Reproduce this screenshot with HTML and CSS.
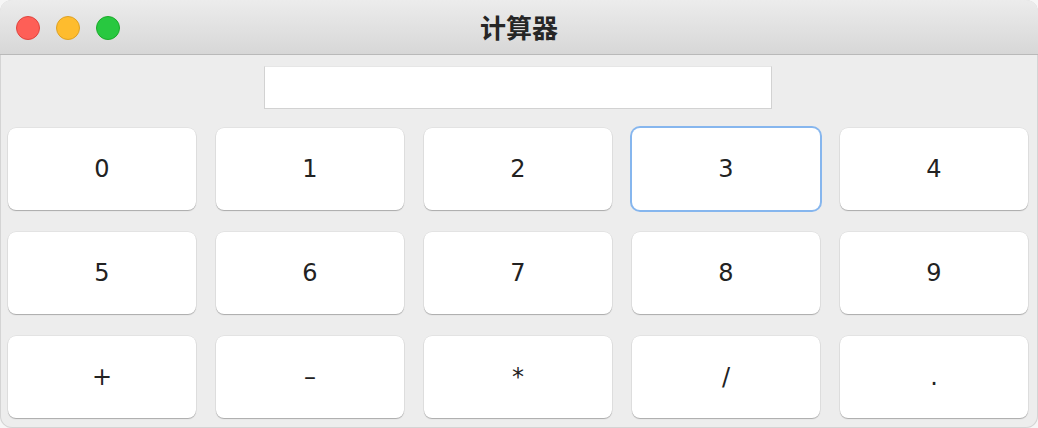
FILE: index.html
```html
<!DOCTYPE html>
<html lang="zh">
  <head>
    <meta charset="UTF-8" />
    <title>计算器</title>
    <link rel="stylesheet" href="styles.css">
  </head>
  <body>
    <div class="window">
      <div class="titlebar">
        <div class="lights">
          <span class="light red"></span>
          <span class="light yellow"></span>
          <span class="light green"></span>
        </div>
        <div class="title">计算器</div>
      </div>

      <div class="content">
        <input type="text" class="display" />

        <div class="keys">
          <button>0</button>
          <button>1</button>
          <button>2</button>
          <button class="focused">3</button>
          <button>4</button>
          <button>5</button>
          <button>6</button>
          <button>7</button>
          <button>8</button>
          <button>9</button>
          <button>+</button>
          <button>–</button>
          <button>*</button>
          <button>/</button>
          <button>.</button>
        </div>
      </div>
    </div>
  </body>
</html>
```

FILE: styles.css
```css
* {
  box-sizing: border-box;
}

body {
  margin: 0;
  background: #f6f6f6;
  font-family: "DejaVu Sans", "Noto Sans CJK SC", sans-serif;
}

.window {
  width: 1038px;
  height: 428px;
  background: #ededed;
  border-radius: 12px;
  overflow: hidden;
  box-shadow: inset 0 0 0 1px #d4d4d4;
}

.titlebar {
  position: relative;
  height: 55px;
  background: linear-gradient(#ececec, #d7d7d7);
  border-bottom: 1px solid #b9b9b9;
  display: flex;
  align-items: center;
  justify-content: center;
}

.lights {
  position: absolute;
  left: 16px;
  top: 16px;
  display: flex;
  gap: 16px;
}

.light {
  width: 24px;
  height: 24px;
  border-radius: 50%;
}

.red {
  background: #fe5f57;
  border: 1px solid #e0443e;
}

.yellow {
  background: #febc2e;
  border: 1px solid #dea123;
}

.green {
  background: #28c840;
  border: 1px solid #1aab29;
}

.title {
  font-family: "Noto Sans CJK SC", sans-serif;
  font-weight: bold;
  font-size: 26px;
  line-height: 1;
  color: #262626;
  margin-top: -1px;
}

.content {
  padding: 11px 10px 0 8px;
  display: flex;
  flex-direction: column;
  align-items: center;
}

.display {
  width: 508px;
  height: 43px;
  margin: 0 0 19px 0;
  border: 1px solid #d2d2d2;
  border-top-color: #e6e6e6;
  background: #fff;
  outline: none;
}

.keys {
  width: 100%;
  display: grid;
  grid-template-columns: repeat(5, 188px);
  grid-auto-rows: 82px;
  column-gap: 20px;
  row-gap: 22px;
}

.keys button {
  background: #fff;
  border: none;
  border-radius: 8px;
  box-shadow: 0 1px 1px rgba(0, 0, 0, 0.25), 0 0 0 0.5px rgba(0, 0, 0, 0.08);
  font-family: "DejaVu Sans", sans-serif;
  font-size: 24px;
  color: #222;
  padding: 0;
}

.keys button.focused {
  box-shadow: 0 0 0 2px #86b6ee;
}
```
